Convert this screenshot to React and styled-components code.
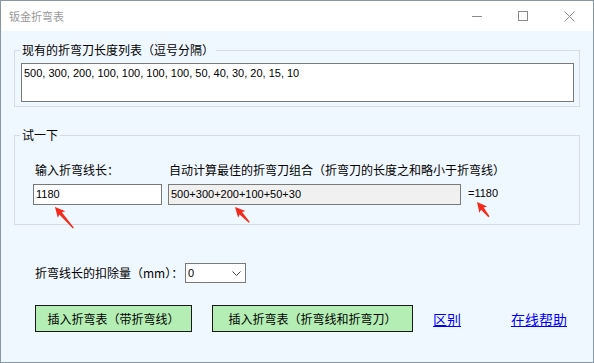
import React from "react";
import styled, { createGlobalStyle } from "styled-components";

const GlobalStyle = createGlobalStyle`
  html, body { margin: 0; padding: 0; background: #ffffff; }
  body {
    font-family: "Noto Sans CJK SC", "Liberation Sans", sans-serif;
    font-size: 12px;
    color: #000;
  }
  * { box-sizing: border-box; }
`;

const Window = styled.div`
  position: relative;
  width: 594px;
  height: 363px;
  border: 1px solid #8797a8;
  background: #f0f8ff;
  display: flex;
  flex-direction: column;
  overflow: hidden;
`;

const TitleBar = styled.div`
  height: 30px;
  background: #ffffff;
  display: flex;
  align-items: center;
  padding-right: 1px;
`;

const Title = styled.div`
  flex: 1;
  padding-left: 8px;
  font-size: 11px;
  line-height: 16px;
  color: #9a9a9a;
`;

const CtrlButton = styled.div`
  width: 46px;
  height: 30px;
  display: flex;
  align-items: center;
  justify-content: center;
  color: #8a8a8a;
`;

const Body = styled.div`
  flex: 1;
  display: flex;
  flex-direction: column;
  padding: 0 13px;
`;

const Group = styled.div`
  position: relative;
  border: 1px solid #d6dce2;
  margin-top: ${(p) => p.$top}px;
  padding: ${(p) => p.$pad};
`;

const GroupLabel = styled.div`
  position: absolute;
  top: -9px;
  left: 5px;
  padding: 0 2px;
  background: #f0f8ff;
  font-size: 12px;
  line-height: 16px;
`;

const ListBox = styled.div`
  height: 39px;
  border: 1px solid #7a7a7a;
  background: #ffffff;
  padding: 3px 2px;
  font-family: "Liberation Sans", sans-serif;
  font-size: 11px;
  line-height: 13px;
`;

const CalcGrid = styled.div`
  display: grid;
  grid-template-columns: 129px 293px auto;
  column-gap: 6px;
  row-gap: 6px;
  align-items: center;
`;

const FieldLabel = styled.div`
  font-size: 12px;
  line-height: 16px;
  padding-left: ${(p) => p.$indent || 0}px;
  white-space: nowrap;
`;

const Field = styled.div`
  height: 21px;
  border: 1px solid #7a7a7a;
  background: ${(p) => (p.$readOnly ? "#f0f0f0" : "#ffffff")};
  padding-left: 2px;
  font-family: "Liberation Sans", sans-serif;
  font-size: 11px;
  line-height: 19px;
`;

const Result = styled.div`
  margin-left: 1px;
  margin-top: -3px;
  font-family: "Liberation Sans", sans-serif;
  font-size: 11px;
  line-height: 14px;
`;

const Row = styled.div`
  display: flex;
  align-items: center;
  padding-left: 21px;
  margin-top: ${(p) => p.$top}px;
`;

const RowLabel = styled.div`
  width: 150px;
  font-size: 12px;
  line-height: 16px;
  white-space: nowrap;
`;

const Combo = styled.div`
  width: 61px;
  height: 20px;
  border: 1px solid #7a7a7a;
  background: #ffffff;
  display: flex;
  align-items: center;
  justify-content: space-between;
  padding: 0 4px 0 2px;
  font-family: "Liberation Sans", sans-serif;
  font-size: 11px;
`;

const GreenButton = styled.div`
  width: ${(p) => p.$w}px;
  height: 27px;
  margin-right: 20px;
  border: 1px solid #1a1a1a;
  background: #b4eeb4;
  display: flex;
  align-items: center;
  justify-content: center;
  font-size: 12px;
  line-height: 16px;
`;

const Link = styled.a`
  color: #0000ff;
  text-decoration: underline;
  font-size: 14px;
  line-height: 18px;
  margin-left: ${(p) => p.$gap || 0}px;
  cursor: pointer;
`;

const ArrowSvg = styled.svg`
  position: absolute;
  left: ${(p) => p.$x - 7}px;
  top: ${(p) => p.$y - 7}px;
  overflow: visible;
`;

const ArrowMark = ({ x, y, angle, length }) => (
  <ArrowSvg $x={x} $y={y} width="40" height="40" viewBox="0 0 40 40">
    <g transform={`translate(6 6) rotate(${angle})`}>
      <path
        d={`M0 0 L10 -5 L8.5 -1.7 L${length} -0.7 L${length} 0.7 L8.5 1.7 L10 5 Z`}
        fill="#f42a1b"
      />
    </g>
  </ArrowSvg>
);

export default function App() {
  return (
    <>
      <GlobalStyle />
      <Window>
        <TitleBar>
          <Title>钣金折弯表</Title>
          <CtrlButton>
            <svg width="10" height="10" viewBox="0 0 10 10">
              <line x1="0" y1="5.5" x2="10" y2="5.5" stroke="currentColor" strokeWidth="1" />
            </svg>
          </CtrlButton>
          <CtrlButton>
            <svg width="10" height="10" viewBox="0 0 10 10">
              <rect x="0.5" y="0.5" width="9" height="9" fill="none" stroke="currentColor" strokeWidth="1" />
            </svg>
          </CtrlButton>
          <CtrlButton>
            <svg width="11" height="11" viewBox="0 0 11 11">
              <path d="M0.5 0.5 L10.5 10.5 M10.5 0.5 L0.5 10.5" stroke="currentColor" strokeWidth="1" />
            </svg>
          </CtrlButton>
        </TitleBar>
        <Body>
          <Group $top={19} $pad="12px 5px 4px 6px">
            <GroupLabel>现有的折弯刀长度列表（逗号分隔）</GroupLabel>
            <ListBox>500, 300, 200, 100, 100, 100, 100, 50, 40, 30, 20, 15, 10</ListBox>
          </Group>
          <Group $top={28} $pad="26px 10px 19px 18px">
            <GroupLabel>试一下</GroupLabel>
            <CalcGrid>
              <FieldLabel $indent={2}>输入折弯线长：</FieldLabel>
              <FieldLabel $indent={1}>自动计算最佳的折弯刀组合（折弯刀的长度之和略小于折弯线）</FieldLabel>
              <span />
              <Field>1180</Field>
              <Field $readOnly>500+300+200+100+50+30</Field>
              <Result>=1180</Result>
            </CalcGrid>
          </Group>
          <Row $top={38}>
            <RowLabel>折弯线长的扣除量（mm）：</RowLabel>
            <Combo>
              <span>0</span>
              <svg width="9" height="5" viewBox="0 0 9 5">
                <path d="M0.5 0.5 L4.5 4.5 L8.5 0.5" fill="none" stroke="#444" strokeWidth="1" />
              </svg>
            </Combo>
          </Row>
          <Row $top={22}>
            <GreenButton $w={157}>插入折弯表（带折弯线）</GreenButton>
            <GreenButton $w={201}>插入折弯表（折弯线和折弯刀）</GreenButton>
            <Link>区别</Link>
            <Link $gap={50}>在线帮助</Link>
          </Row>
        </Body>
        <ArrowMark x={55} y={207} angle={49} length={28} />
        <ArrowMark x={235} y={207} angle={47} length={21} />
        <ArrowMark x={477} y={202} angle={51} length={19} />
      </Window>
    </>
  );
}
